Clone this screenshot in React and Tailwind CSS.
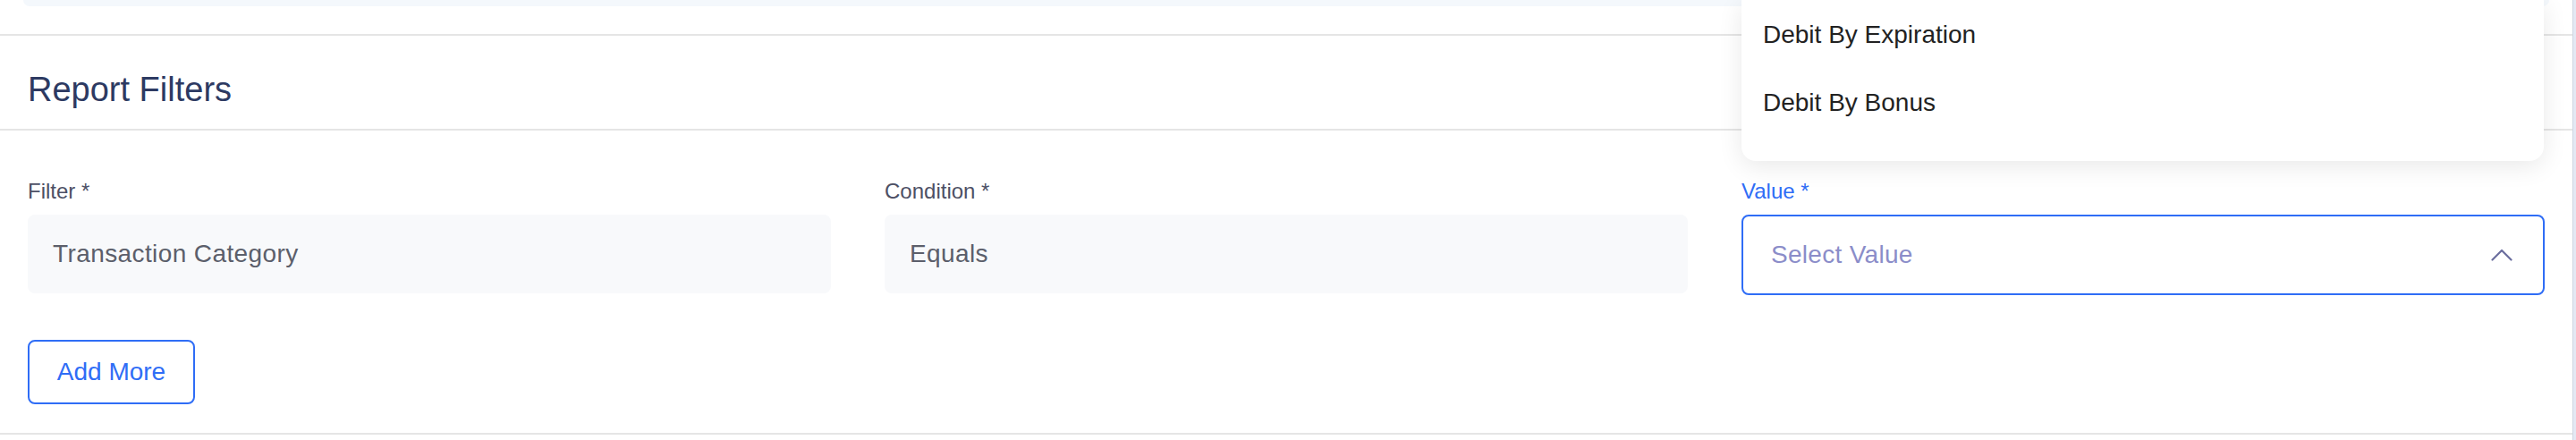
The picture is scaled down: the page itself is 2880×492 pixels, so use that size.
import React from "react";

const fields = [
  { label: "Filter *", value: "Transaction Category" },
  { label: "Condition *", value: "Equals" },
];

const options = ["Debit By Expiration", "Debit By Bonus"];

function ChevronUp() {
  return (
    <svg width="24" height="14" viewBox="0 0 24 14" fill="none">
      <path d="M1.5 12.5 L12 2 L22.5 12.5" stroke="#6b6e9e" strokeWidth="2.2" strokeLinecap="round" strokeLinejoin="round" />
    </svg>
  );
}

export default function App() {
  return (
    <div
      className="relative flex h-[492px] w-full overflow-hidden bg-white"
      style={{ fontFamily: '"Liberation Sans", Arial, sans-serif' }}
    >
      <div className="flex flex-1 flex-col">
        {/* bottom of the card above */}
        <div className="h-[40px] border-b-2 border-[#e5e5e5] px-[26px]">
          <div className="h-[7px] rounded-b-[14px] bg-[#f4f8fc]" />
        </div>

        {/* Header */}
        <div className="h-[106px] border-b-2 border-[#e5e5e5] px-[31px] pt-[38px]">
          <h2 className="text-[38px] leading-[44px] text-[#2d3a62]">Report Filters</h2>
        </div>

        {/* Filters */}
        <div className="flex-1 border-b-2 border-[#e5e5e5] px-[31px] pt-[52px]">
          <div className="grid grid-cols-3 gap-x-[60px]">
            {fields.map((f) => (
              <div key={f.label} className="flex flex-col">
                <label className="text-[24px] leading-[32px] text-[#4d5065]">{f.label}</label>
                <div className="mt-[10px] flex h-[88px] items-center rounded-[8px] bg-[#f8f9fb] px-[28px] text-[28px] tracking-[0.4px] text-[#5c5f6b]">
                  {f.value}
                </div>
              </div>
            ))}
            <div className="flex flex-col">
              <label className="text-[24px] leading-[32px] text-[#2f6df6]">Value *</label>
              <div className="mt-[10px] flex h-[90px] items-center justify-between rounded-[8px] border-2 border-[#2f6df6] bg-white pl-[31px] pr-[34px] text-[28px] tracking-[0.3px] text-[#8b8dc9]">
                <span>Select Value</span>
                <ChevronUp />
              </div>
            </div>
          </div>
          <button className="mt-[50px] flex h-[72px] w-[187px] items-center justify-center rounded-[8px] border-2 border-[#2f6df6] bg-white text-[28px] text-[#2f6df6]">
            Add More
          </button>
        </div>
        <div className="h-[6px]" />
      </div>

      {/* scrollbar edge */}
      <div className="w-[4px] border-l border-[#cfd6e2] bg-[#e4e9f4]" />

      {/* open dropdown menu */}
      <div className="absolute left-[1947px] top-0 h-[180px] w-[897px] rounded-b-[16px] bg-white pt-[1px] shadow-[0_6px_28px_rgba(0,0,0,0.09)]">
        {options.map((o) => (
          <div key={o} className="h-[76px] px-[24px] text-[28px] leading-[76px] text-[#222222]">
            {o}
          </div>
        ))}
      </div>
    </div>
  );
}
